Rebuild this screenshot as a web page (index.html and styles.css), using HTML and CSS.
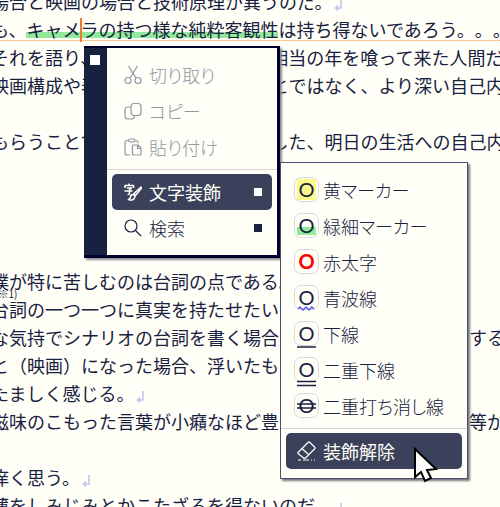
FILE: index.html
```html
<!DOCTYPE html>
<html lang="ja">
<head>
    <meta charset="UTF-8">
    <meta name="viewport" content="width=device-width, initial-scale=1.0">
    <title>エディタ</title>
    <link rel="stylesheet" href="styles.css">
</head>
<body>
    <!-- Return mark shown at the end of a paragraph -->
    <svg class="defs" width="0" height="0" aria-hidden="true">
        <symbol id="return" viewBox="0 0 18 18">
            <path d="M9 4v9H4M6 10.500L3.500 13L6 15.500" fill="none" stroke="#c3c1ea" stroke-width="1.500"/>
        </symbol>
    </svg>

    <!-- Editor text -->
    <main class="editor">
        <p>場合と映画の場合と技術原理が異うのだ。<svg class="return"><use href="#return"/></svg></p>
        <p class="current">も、<mark>キャメ<span class="caret"></span>ラの持つ様な純粋客観性</mark>は持ち得ないであろう。。。</p>
        <p>それを語り、<span class="gap"></span>相当の年を喰って来た人間だ</p>
        <p>映画構成や表<span class="gap"></span>とではなく、より深い自己内</p>
        <p></p>
        <p>もらうことで<span class="gap"></span>した、明日の生活への自己内</p>
        <p></p>
        <p></p>
        <p></p>
        <p></p>
        <p>僕が特に苦しむのは台詞の点である。</p>
        <p><span class="note">(※1)</span>台詞の一つ一つに真実を持たせたいか</p>
        <p>な気持でシナリオの台詞を書く場合、<span class="gap"></span>する</p>
        <p>と（映画）になった場合、浮いたもの</p>
        <p>たましく感じる。<svg class="return"><use href="#return"/></svg></p>
        <p>滋味のこもった言葉が小癪なほど豊富<span class="gap"></span>等が</p>
        <p></p>
        <p>痒く思う。<svg class="return"><use href="#return"/></svg></p>
        <p>薄をしみじみとかこたざるを得ないのだ。<svg class="return"><use href="#return"/></svg></p>
    </main>

    <!-- Context menu -->
    <div class="menu main-menu" role="menu">
        <div class="rail"><span class="square"></span></div>
        <div class="items">
            <button type="button" class="item" disabled>
                <svg class="icon" viewBox="0 0 18 18"><path d="M4.500 0l7.500 12M13.500 0L6 12"/><circle cx="4" cy="14.500" r="3"/><circle cx="14" cy="14.500" r="3"/></svg>
                <span>切り取り</span>
            </button>
            <button type="button" class="item" disabled>
                <svg class="icon" viewBox="0 0 18 18"><rect x="7" y="1.500" width="10" height="12" rx="3"/><path d="M7 5H4a3 3 0 0 0-3 3v6a3 3 0 0 0 3 3h3.500a3 3 0 0 0 3-3"/></svg>
                <span>コピー</span>
            </button>
            <button type="button" class="item" disabled>
                <svg class="icon" viewBox="0 0 18 18"><path d="M4 2.500H3a2 2 0 0 0-2 2V15a2 2 0 0 0 2 2h3M11.500 2.500H12a2 2 0 0 1 2 2V5"/><rect x="4.500" y="1" width="6.500" height="3" rx="1.500"/><path d="M9.500 7h4.500l3 3V16a1 1 0 0 1-1 1H9.500a1 1 0 0 1-1-1V8a1 1 0 0 1 1-1zM13.500 7v3.500H17"/></svg>
                <span>貼り付け</span>
            </button>
            <hr>
            <button type="button" class="item active">
                <svg class="icon bold" viewBox="0 0 18 18"><path d="M5 .500v2M1 5V2.500h8.500V5M3 5h4.500L5.500 7v3.500q0 1-2 1M.500 8h8"/><path d="M17 4L9.500 11l1.500 2L17.500 5zM9.500 11.500c-2 0-3 1-3 2.500s-1 2-2 2.500c3 1 6 .500 6.500-3"/></svg>
                <span>文字装飾</span>
                <span class="square"></span>
            </button>
            <button type="button" class="item">
                <svg class="icon" viewBox="0 0 18 18"><circle cx="7" cy="7" r="6"/><path d="M11.500 11.500l5.500 5.500"/></svg>
                <span>検索</span>
                <span class="square"></span>
            </button>
        </div>
    </div>

    <!-- Text decoration submenu -->
    <div class="menu sub-menu" role="menu">
        <button type="button" class="item">
            <span class="badge yellow">O</span>
            <span>黄マーカー</span>
        </button>
        <button type="button" class="item">
            <span class="badge green">O</span>
            <span>緑細マーカー</span>
        </button>
        <button type="button" class="item">
            <span class="badge red">O</span>
            <span>赤太字</span>
        </button>
        <button type="button" class="item">
            <span class="badge">O<svg class="lines wave" viewBox="0 0 25 30"><path d="M4 24l2-2 3 3 3-3 3 3 3-3 2 2"/></svg></span>
            <span>青波線</span>
        </button>
        <button type="button" class="item">
            <span class="badge">O<svg class="lines" viewBox="0 0 25 30"><path d="M3 26h19"/></svg></span>
            <span>下線</span>
        </button>
        <button type="button" class="item">
            <span class="badge">O<svg class="lines" viewBox="0 0 25 30"><path d="M3 24.500h19M3 28.500h19"/></svg></span>
            <span>二重下線</span>
        </button>
        <button type="button" class="item">
            <span class="badge">O<svg class="lines" viewBox="0 0 25 30"><path d="M3 11h19M3 15h19"/></svg></span>
            <span>二重打ち消し線</span>
        </button>
        <hr>
        <button type="button" class="item active">
            <svg class="icon eraser" viewBox="0 0 25 25"><path d="M4 14.500L14 4.500q1-1 2 0l4.500 4.500q1 1 0 2L12 19.500q-1.500 1.500-3 0l-5-4q-.500-.500 0-1zM8 10.500l7 6.500"/><path d="M4 22h3M9 22h6M17 22h1M20 22h1"/></svg>
            <span>装飾解除</span>
        </button>
    </div>

    <!-- Mouse pointer -->
    <svg class="pointer" viewBox="0 0 26 36" aria-hidden="true">
        <path d="M2 2v28l6-5 4 9 6-3-4-8 9-1z" fill="#fff" stroke="#000" stroke-width="2"/>
    </svg>
</body>
</html>
```

FILE: styles.css
```css
body {
    margin: 0;
    height: 100vh;
    position: relative;
    overflow: hidden;
    background-color: #fffff8;
    color: #18213f;
    font-family: "Noto Sans CJK JP", sans-serif;
    font-size: 18px;
}

.defs {
    position: absolute;
}

/* Editor text, scrolled a little past its top left corner */
.editor {
    margin: -13px 0 0 -9px;
    overflow: hidden;
    white-space: nowrap;
    text-spacing-trim: space-all;
}

.editor p {
    position: relative;
    height: 28px;
    margin: 0;
    line-height: 28px;
}

.editor .current {
    background: repeating-linear-gradient(90deg, #f8a860 0 1px, #fde3c8 1px 2px) 0 25px / 100% 1px no-repeat;
}

mark {
    color: inherit;
    background: linear-gradient(#93e99b, #93e99b) 0 16px / 100% 6px no-repeat;
}

.caret {
    position: absolute;
    top: 3px;
    width: 2px;
    height: 24px;
    background-color: #f07a2c;
}

/* Part of a line that lies behind an open menu */
.gap {
    display: inline-block;
    width: 172px;
}

.note {
    position: absolute;
    top: -7px;
    left: 4px;
    font-size: 10px;
    line-height: 12px;
}

.return {
    width: 18px;
    height: 18px;
    vertical-align: middle;
}

/* Menus */
.menu {
    position: absolute;
    background-color: #fffff8;
}

.main-menu {
    top: 46px;
    left: 84px;
    display: flex;
    width: 196px;
    box-sizing: border-box;
    border: solid #00002e;
    border-width: 2px 3px 3px 0;
    box-shadow: 2px 2px 2px #8a8a8a;
}

.rail {
    width: 23px;
    padding: 7px 0 0 6px;
    box-sizing: border-box;
    background-color: #18213f;
}

.rail .square {
    display: block;
    width: 10px;
    height: 10px;
    background-color: #fff;
}

.items {
    flex: 1;
    padding: 9px 0;
}

.sub-menu {
    top: 162px;
    left: 280px;
    width: 188px;
    padding: 9px 0;
    box-sizing: border-box;
    border: 1px solid #4a4f73;
    box-shadow: 2px 2px 2px #777;
}

.item {
    display: flex;
    align-items: center;
    gap: 7px;
    width: calc(100% - 10px);
    height: 36px;
    margin: 0 5px;
    padding: 0 10px 1px 12px;
    border: none;
    border-radius: 5px;
    background: none;
    color: #18213f;
    font: inherit;
    font-weight: 300;
    font-feature-settings: "palt";
    line-height: 24px;
}

.item:disabled {
    color: #9395a5;
}

.item.active {
    background-color: #3b415b;
    color: #fffff8;
    font-weight: 400;
}

.item .square {
    width: 8px;
    height: 8px;
    margin-left: auto;
    background-color: currentColor;
}

.sub-menu .item {
    gap: 4px;
    padding: 0 8px 1px;
}

hr {
    height: 1px;
    margin: 4px 0;
    border: none;
    background-color: #d3d5da;
}

.icon {
    width: 18px;
    height: 18px;
    fill: none;
    stroke: currentColor;
    stroke-width: 1.2;
    stroke-linejoin: round;
}

.bold {
    stroke-width: 1.6;
}

.eraser {
    width: 25px;
    height: 25px;
}

/* Decoration samples */
.badge {
    position: relative;
    width: 25px;
    height: 25px;
    box-sizing: border-box;
    border: 1px solid #d9d9dd;
    border-radius: 7px;
    font-family: Lato, sans-serif;
    font-size: 20px;
    font-weight: 400;
    line-height: 23px;
    text-align: center;
}

.yellow {
    background: linear-gradient(#fbf98c, #fbf98c) center / 19px 21px no-repeat;
}

.green {
    background: linear-gradient(#93e99b, #93e99b) center 13px / 19px 8px no-repeat;
}

.red {
    color: #ff0000;
    font-weight: 700;
}

.lines {
    position: absolute;
    top: -1px;
    left: -1px;
    width: 25px;
    height: 30px;
    fill: none;
    stroke: #18213f;
    stroke-width: 1.5;
}

.wave {
    stroke: #5a5af5;
}

.pointer {
    position: absolute;
    top: 447px;
    left: 413px;
    width: 26px;
    height: 36px;
}
```
